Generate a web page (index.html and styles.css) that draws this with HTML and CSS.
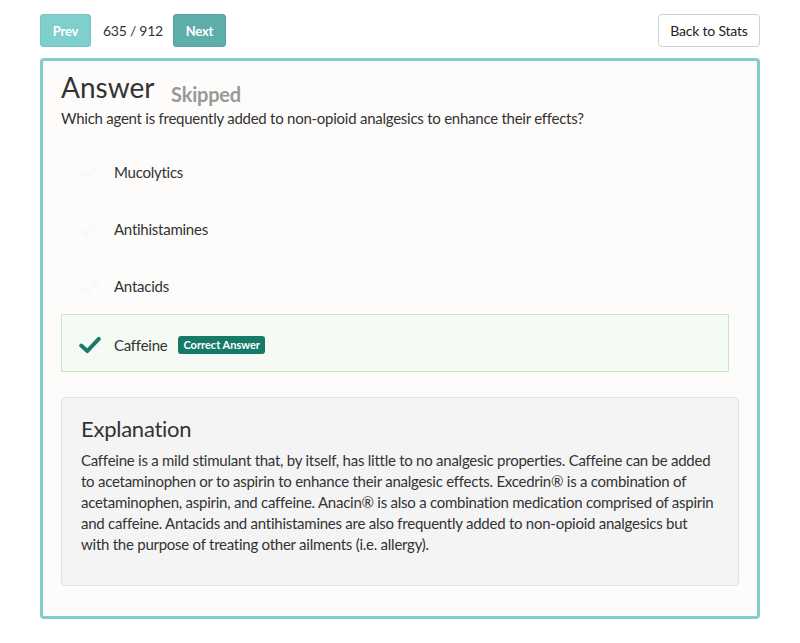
FILE: index.html
```html
<!DOCTYPE html>
<html>
<head>
<meta charset="utf-8">
<link rel="stylesheet" href="styles.css">
</head>
<body>
<div class="page">
  <div class="toolbar">
    <div class="nav">
      <button class="btn btn-prev">Prev</button>
      <span class="counter">635 / 912</span>
      <button class="btn btn-next">Next</button>
    </div>
    <button class="btn-back">Back to Stats</button>
  </div>
  <div class="card">
    <h1 class="title">Answer <span class="status">Skipped</span></h1>
    <p class="question">Which agent is frequently added to non-opioid analgesics to enhance their effects?</p>
    <ul class="options">
      <li class="option"><svg class="check faint" viewBox="0 0 20 16"><path d="M2 8.5 L7.5 13.5 L18 2.5" fill="none" stroke="currentColor" stroke-width="3.6" stroke-linecap="round" stroke-linejoin="round"/></svg><span>Mucolytics</span></li>
      <li class="option"><svg class="check faint" viewBox="0 0 20 16"><path d="M2 8.5 L7.5 13.5 L18 2.5" fill="none" stroke="currentColor" stroke-width="3.6" stroke-linecap="round" stroke-linejoin="round"/></svg><span>Antihistamines</span></li>
      <li class="option"><svg class="check faint" viewBox="0 0 20 16"><path d="M2 8.5 L7.5 13.5 L18 2.5" fill="none" stroke="currentColor" stroke-width="3.6" stroke-linecap="round" stroke-linejoin="round"/></svg><span>Antacids</span></li>
      <li class="option correct"><svg class="check" viewBox="0 0 20 16"><path d="M2 8.5 L7.5 13.5 L18 2.5" fill="none" stroke="currentColor" stroke-width="3.6" stroke-linecap="round" stroke-linejoin="round"/></svg><span>Caffeine</span><span class="badge">Correct Answer</span></li>
    </ul>
    <div class="explanation">
      <h2>Explanation</h2>
      <p>Caffeine is a mild stimulant that, by itself, has little to no analgesic properties. Caffeine can be added to acetaminophen or to aspirin to enhance their analgesic effects. Excedrin® is a combination of acetaminophen, aspirin, and caffeine. Anacin® is also a combination medication comprised of aspirin and caffeine. Antacids and antihistamines are also frequently added to non-opioid analgesics but with&nbsp;the purpose of treating other ailments (i.e. allergy).</p>
    </div>
  </div>
</div>
</body>
</html>
```
FILE: styles.css
```css
* { box-sizing: border-box; }
html, body { margin: 0; padding: 0; background: #fff; }
body {
  font-family: Lato, "Open Sans", sans-serif;
  color: #333;
  letter-spacing: -0.25px;
}
.page { padding: 14px 40px 0 40px; }
.toolbar {
  display: flex;
  justify-content: space-between;
  align-items: center;
  height: 33px;
}
.nav { display: flex; align-items: center; }
.btn {
  height: 33px;
  border: 1px solid transparent;
  border-radius: 3px;
  color: #fff;
  font-family: Lato, sans-serif;
  font-weight: bold;
  font-size: 13px;
  letter-spacing: -0.2px;
  padding: 0;
}
.btn-prev { background: #7fcfcd; border-color: #76c5c3; width: 51px; }
.btn-next { background: #5dada8; border-color: #57a39f; width: 53px; }
.counter { font-size: 14px; color: #333; margin: 0 10px 0 12px; }
.btn-back {
  height: 33px;
  width: 102px;
  background: #fff;
  border: 1px solid #d0d0d0;
  border-radius: 4px;
  font-family: Lato, sans-serif;
  font-size: 14px;
  letter-spacing: -0.2px;
  color: #222;
  padding: 0;
}
.card {
  margin-top: 11px;
  border: 3px solid #7ecfcc;
  border-radius: 4px;
  background: #fdfcfa;
  padding: 8px 18px 30px 18px;
  height: 561px;
}
.title {
  margin: 0;
  height: 36px;
  font-size: 28px;
  line-height: 36px;
  font-weight: normal;
  color: #333;
  letter-spacing: 0;
}
.status {
  font-size: 20px;
  font-weight: bold;
  color: #999;
  margin-left: 10px;
  vertical-align: -4px;
  letter-spacing: -0.2px;
}
.question {
  margin: 3px 0 0 0;
  font-size: 15px;
  line-height: 20px;
}
.options {
  list-style: none;
  margin: 15px 10px 0 0;
  padding: 0;
}
.option {
  display: flex;
  align-items: center;
  height: 57px;
  padding-left: 17px;
  border: 1px solid transparent;
  font-size: 15px;
}
.option.correct {
  height: 58px;
  background: #f5faf4;
  border-color: #c9e6c3;
  padding-top: 3px;
}
.check {
  width: 22px;
  height: 18px;
  margin-right: 13px;
  color: #1b7a6b;
}
.check.faint { color: #f9f9f7; }
.badge {
  margin-left: 11px;
  background: #177a68;
  color: #fff;
  font-size: 11px;
  font-weight: bold;
  line-height: 14px;
  padding: 2px 5px;
  border-radius: 3px;
  letter-spacing: 0;
}
.explanation {
  margin-top: 25px;
  background: #f4f4f4;
  border: 1px solid #e2e2e2;
  border-radius: 4px;
  padding: 17px 19px 30px 19px;
}
.explanation h2 {
  margin: 0;
  font-size: 22px;
  line-height: 28px;
  font-weight: normal;
  color: #333;
}
.explanation p {
  margin: 7px 0 0 0;
  font-size: 15px;
  line-height: 21px;
}
```
